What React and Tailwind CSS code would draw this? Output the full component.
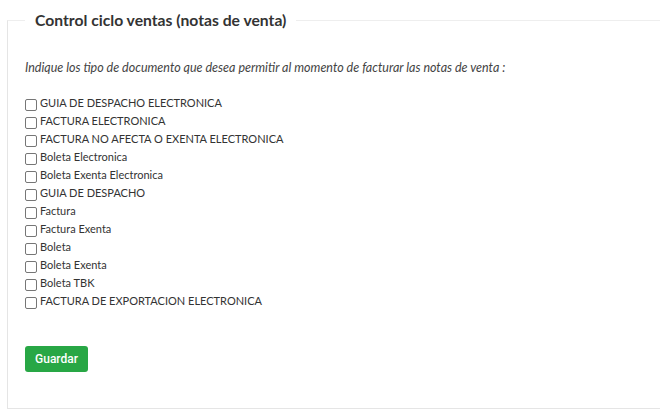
const TIPOS = [
  "GUIA DE DESPACHO ELECTRONICA",
  "FACTURA ELECTRONICA",
  "FACTURA NO AFECTA O EXENTA ELECTRONICA",
  "Boleta Electronica",
  "Boleta Exenta Electronica",
  "GUIA DE DESPACHO",
  "Factura",
  "Factura Exenta",
  "Boleta",
  "Boleta Exenta",
  "Boleta TBK",
  "FACTURA DE EXPORTACION ELECTRONICA",
];

export default function App() {
  return (
    <div className="w-[660px] h-[414px] bg-white overflow-hidden font-['Lato',sans-serif] text-[#333]">
      <fieldset className="ml-[7px] mt-[10px] w-[680px] h-[399px] border border-[#e5e5e5] border-t-[#eeeeee] pl-[17px] pt-0">
        <legend className="px-[10px] text-[15.7px] font-bold leading-[20px] text-[#333]">
          Control ciclo ventas (notas de venta)
        </legend>

        {/* descripcion */}
        <p className="mt-[30px] text-[12.5px] italic text-[#444] leading-[16px]">
          Indique los tipo de documento que desea permitir al momento de facturar las notas de venta :
        </p>

        {/* tipos de documento */}
        <div className="mt-[18px] flex flex-col">
          {TIPOS.map((t) => (
            <label key={t} className="flex items-center h-[18px] text-[11px] text-[#333] leading-[18px]">
              <span className="w-[12px] h-[12px] mt-[3px] mr-[3px] border border-[#767676] rounded-[2px] bg-white" />
              {t}
            </label>
          ))}
        </div>

        <button className="mt-[36px] w-[63px] h-[26px] rounded-[3px] bg-[#28a745] text-white text-[12px] font-['Roboto',sans-serif] font-medium">
          Guardar
        </button>
      </fieldset>
    </div>
  );
}
